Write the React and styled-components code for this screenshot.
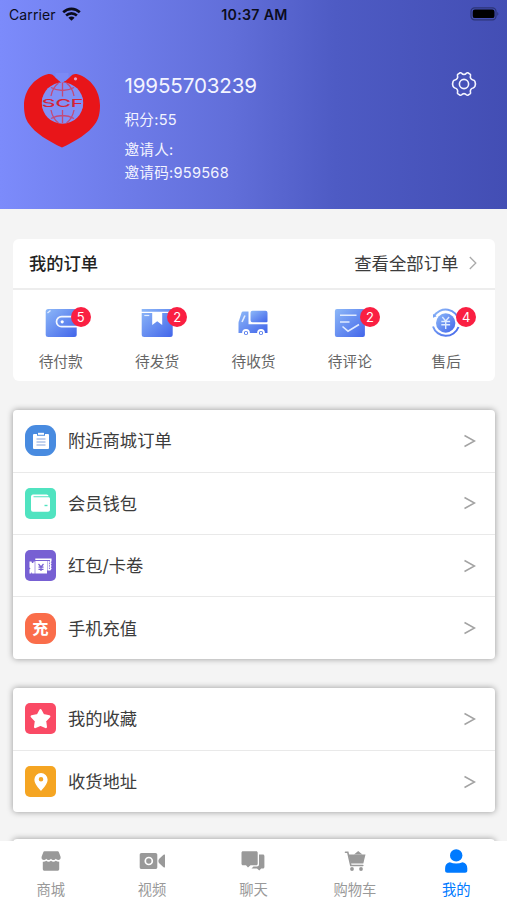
import React from 'react';
import styled, { createGlobalStyle, css } from 'styled-components';

const GlobalStyle = createGlobalStyle`
  * {
    box-sizing: border-box;
  }
  body {
    margin: 0;
    background: #f4f4f4;
    font-family: Inter, 'Noto Sans CJK SC', sans-serif;
    color: #3c3c3c;
    overflow: hidden;
  }
`;

const Page = styled.div`
  display: flex;
  flex-direction: column;
  width: 507px;
  height: 900px;
  overflow: hidden;
  background: #f4f4f4;
`;

const Header = styled.header`
  flex: none;
  height: 208.5px;
  background: linear-gradient(to right, #7c8bfb 0%, #616ed9 46%, #4e5bc4 66%, #434eb4 100%);
`;

const StatusBar = styled.div`
  display: grid;
  grid-template-columns: 1fr auto 1fr;
  align-items: center;
  height: 28px;
  padding: 0 7px 0 9px;
  color: #0b0c1c;
  font-size: 14px;

  .status__carrier {
    display: flex;
    align-items: center;
    gap: 6px;
    letter-spacing: 0.1px;
  }
  .status__time {
    font-size: 14.2px;
    font-weight: 600;
    letter-spacing: 0.3px;
  }
  .status__battery {
    justify-self: end;
    display: block;
  }
`;

const Profile = styled.div`
  display: flex;
  align-items: flex-start;
  padding: 44px 30px 0 23px;

  .profile__logo {
    flex: none;
    margin-top: 1px;
  }
  .profile__gear {
    margin: -1px 0 0 auto;
  }
`;

const ProfileInfo = styled.div`
  margin-left: 23.5px;
  color: #f3f4ff;

  p {
    margin: 0;
    font-size: 14.6px;
    line-height: 23px;
    letter-spacing: 0.25px;
    white-space: nowrap;
  }
  .profile__phone {
    font-size: 20.6px;
    line-height: 28px;
    letter-spacing: -0.15px;
  }
  .profile__points {
    margin: 9px 0 7px;
  }
`;

const Content = styled.main`
  flex: 1;
  min-height: 0;
  padding: 30.5px 12.5px 0;
  overflow: hidden;
`;

const OrderCard = styled.section`
  height: 141.5px;
  border-radius: 6px;
  background: #fff;
`;

const OrderHead = styled.div`
  display: flex;
  align-items: center;
  height: 51px;
  padding: 0 18px 2px 16.5px;
  border-bottom: 2px solid #ededed;
  font-size: 17.4px;

  h2 {
    margin: 0;
    font-size: 17.3px;
    font-weight: 500;
    color: #222;
  }
  span {
    margin-left: auto;
  }
  svg {
    margin-left: 10px;
  }
`;

const OrderGrid = styled.div`
  display: grid;
  grid-template-columns: repeat(5, 1fr);
`;

const OrderItem = styled.div`
  display: flex;
  flex-direction: column;
  align-items: center;
  padding-top: 18px;
  color: #666;
  font-size: 14.7px;
  line-height: 22px;

  .order__icon {
    position: relative;
    height: 30px;
    margin-bottom: 13px;
  }
  svg {
    display: block;
  }
`;

const Badge = styled.span`
  position: absolute;
  top: -1px;
  left: 26px;
  width: 20px;
  height: 20px;
  border-radius: 50%;
  background: #fa1f42;
  color: #fff;
  font-size: 13px;
  line-height: 20px;
  text-align: center;
`;

const MenuCard = styled.section`
  margin-top: ${({ $gap }) => $gap || '29px'};
  border-radius: 4px;
  background: #fff;
  box-shadow: 0 0 6px rgba(0, 0, 0, 0.38);
`;

const MenuRow = styled.div`
  display: flex;
  align-items: center;
  height: 62.3px;
  padding: 0 18.5px 0 12.5px;
  font-size: 17.3px;

  & + & {
    border-top: 1.5px solid #e9e9e9;
  }
  .menu__label {
    flex: 1;
    margin-left: 12px;
    padding-bottom: 2px;
  }
`;

const Tile = styled.div`
  display: flex;
  align-items: center;
  justify-content: center;
  width: 31px;
  height: 31px;
  border-radius: ${({ $round }) => ($round ? '11px' : '5px')};
  background: ${({ $color }) => $color};
  color: #fff;
  font-size: 16.3px;
  font-weight: 700;
  line-height: 28px;
`;

const TabBar = styled.nav`
  flex: none;
  display: grid;
  grid-template-columns: repeat(5, 1fr);
  height: 59.5px;
  background: #fff;
`;

const Tab = styled.div`
  display: flex;
  flex-direction: column;
  align-items: center;
  padding-top: 8px;
  color: #999;
  font-size: 14.3px;
  line-height: 20px;

  svg {
    display: block;
    margin-bottom: 7px;
  }
  ${({ $active }) =>
    $active &&
    css`
      color: #007aff;
    `}
`;

const WifiIcon = () => (
  <svg width="19" height="14" viewBox="0 0 19 14" fill="none" stroke="#0b0c1c" strokeWidth="2.6">
    <path d="M1.2 5.3C6 .7 13 .7 17.8 5.3" />
    <path d="M4.1 8.5c3.1-2.9 7.7-2.9 10.8 0" />
    <path d="M9.5 13.8 6.4 10.7c1.7-1.5 4.5-1.5 6.2 0z" fill="#0b0c1c" stroke="none" />
  </svg>
);

const BatteryIcon = () => (
  <svg className="status__battery" width="30" height="14" viewBox="0 0 30 14">
    <rect x="1" y=".8" width="25" height="12" rx="3.6" fill="none" stroke="#2c3577" strokeWidth="1.2" />
    <rect x="2.7" y="2.5" width="21.8" height="8.6" rx="2.2" fill="#000" />
    <path d="M27.3 5v3.8c1.4-.5 1.4-3.3 0-3.8z" fill="#2c3577" />
  </svg>
);

const Logo = () => (
  <svg className="profile__logo" width="78" height="76" viewBox="0 0 78 76">
    <path
      d="M24.5 1.2c3.2-.8 5.3.1 8 3.2l4 3.6c1.5.6 4.5.6 6 0l4-3.6c2.7-3.1 4.8-4 8-3.2C67.5 5 77 17.5 77 32.5c0 7.5-1.5 14-5 18.5C66 60 52 68.5 39 74.5 26 68.5 12 60 6 51 2.5 46.5 1 40 1 32.5 1 17.5 11 5 24.500 1.200z"
      fill="#e81519"
    />
    <path d="m32.500 4.500 6.500 6 6.500-6V0h-13z" fill="#7b8af5" />
    <circle cx="39.500" cy="30" r="20.700" fill="#8290f5" />
    <g fill="none" stroke="#c34a78" strokeWidth="1.300">
      <path d="M39.500 9.500v14M39.500 37v13.500M28 14.500c7 4 16 4 23 0M28 45.500c7-4 16-4 23 0" />
      <path d="M35.500 10c-4 3-6.500 7.500-7.500 13M43.500 10c4 3 6.500 7.500 7.500 13M28 37c1 5.500 3.500 10 7.500 13M51 37c-1 5.500-3.500 10-7.500 13" />
    </g>
    <rect x="19.500" y="24.500" width="40" height="11" fill="#8290f5" />
    <text
      x="18.800"
      y="34"
      textLength="41.500"
      lengthAdjust="spacingAndGlyphs"
      fontFamily="Inter, sans-serif"
      fontSize="11"
      fontWeight="500"
      fill="#d52335"
    >
      SCF
    </text>
    <circle cx="52.500" cy="5.800" r="1.600" fill="#e9a0c0" />
  </svg>
);

const GearIcon = () => (
  <svg className="profile__gear" width="26" height="26" viewBox="0 0 26 26" fill="none" stroke="#f3f4ff" strokeWidth="1.600" strokeLinejoin="round">
    <path d="M9.200 1.800Q10 1.500 10.700 2.200C11.800 3.800 14.200 3.800 15.300 2.200Q16 1.500 16.800 1.800L19 3.100Q19.800 3.700 19.500 4.700C18.800 6.600 20 8.700 22 9Q23.200 9.200 23.900 10.400Q24.900 12.500 23.900 15.400Q23.200 16.700 22 17C20 17.300 18.800 19.400 19.500 21.300Q19.800 22.300 19 22.900L16.800 24.200Q16 24.500 15.300 23.800C14.200 22.200 11.800 22.200 10.700 23.800Q10 24.500 9.200 24.200L7 22.900Q6.200 22.300 6.500 21.300C7.200 19.400 6 17.300 4 17Q2.800 16.700 2.100 15.400Q1.100 12.500 2.100 10.400Q2.800 9.200 4 9C6 8.700 7.200 6.600 6.500 4.700Q6.200 3.700 7 3.100Z" />
    <circle cx="13" cy="13" r="4.600" />
  </svg>
);

const HeadArrow = () => (
  <svg width="8" height="14" viewBox="0 0 8 14" fill="none" stroke="#aaa" strokeWidth="1.300">
    <path d="m.8 1 6 6-6 6" />
  </svg>
);

const RowArrow = () => (
  <svg width="12" height="14" viewBox="0 0 12 14" fill="none" stroke="#a3a3a3" strokeWidth="1.500">
    <path d="m.5 1.500 10 5.500-10 5.500" />
  </svg>
);

const BlueFill = ({ id }) => (
  <defs>
    <linearGradient id={id} x1="0" y1="0" x2="1" y2="1">
      <stop offset="0" stopColor="#8db8f8" />
      <stop offset="1" stopColor="#4265ea" />
    </linearGradient>
  </defs>
);

const orderIcons = {
  pay: (
    <svg width="32" height="30" viewBox="0 0 32 30">
      <BlueFill id="pay" />
      <rect x=".7" y="1" width="31" height="28" rx="2.500" fill="url(#pay)" />
      <path d="M2.500 5 5.500 2.500" stroke="#e3eeff" strokeWidth="1.300" />
      <path d="M32 8.700H16.500a5 5 0 0 0 0 10H32" fill="none" stroke="#f3f7ff" strokeWidth="1.700" />
      <circle cx="17.200" cy="13.800" r="1.600" fill="#fff" />
    </svg>
  ),
  box: (
    <svg width="32" height="30" viewBox="0 0 32 30">
      <BlueFill id="box" />
      <path d="M.7 1h31v2.800H.7zM.7 5h10.500v12l5-3.800 5 3.800V5h10.500v21.500a2.500 2.500 0 0 1-2.500 2.500h-26A2.500 2.500 0 0 1 .7 26.500z" fill="url(#box)" />
      <path d="M3.300 7.500h5" stroke="#e3eeff" strokeWidth="1.200" />
    </svg>
  ),
  truck: (
    <svg width="32" height="30" viewBox="0 0 32 30">
      <BlueFill id="truck" />
      <path d="M15.500 2.800h13a2 2 0 0 1 2 2v8.500a1 1 0 0 1-1 1h-14a2 2 0 0 1-2-2V4.800a2 2 0 0 1 2-2z" fill="url(#truck)" />
      <path d="M6 3.500h5.500v12.800h19v8.800H1.500V15c0-1 .2-1.700.6-2.500l2.500-8c.3-.6.800-1 1.400-1z" fill="url(#truck)" />
      <path d="M8 7.500 5 14" stroke="#e3eeff" strokeWidth="1.600" />
      <circle cx="9" cy="25" r="3" fill="#4c74eb" stroke="#fff" strokeWidth="1.800" />
      <circle cx="24" cy="25" r="3" fill="#4c74eb" stroke="#fff" strokeWidth="1.800" />
      <circle cx="9" cy="25" r="1.200" fill="#fff" />
      <circle cx="24" cy="25" r="1.200" fill="#fff" />
    </svg>
  ),
  comment: (
    <svg width="32" height="30" viewBox="0 0 32 30">
      <BlueFill id="comment" />
      <rect x=".9" y="1" width="30" height="28" rx="2" fill="url(#comment)" />
      <path d="M6 7.300h16.500M6 14h9.500M8.500 18.500l5.500 4.700L25 16.500" fill="none" stroke="#dfeaff" strokeWidth="1.600" />
    </svg>
  ),
  refund: (
    <svg width="32" height="30" viewBox="0 0 32 30">
      <BlueFill id="refund" />
      <circle cx="15.700" cy="15" r="9.700" fill="url(#refund)" />
      <path d="M3.800 8.500A13.500 13.500 0 0 1 29 13M3 18.500A13.500 13.500 0 0 0 28.500 19" fill="none" stroke="url(#refund)" strokeWidth="2" />
      <path d="M3 6v3.800l3.700-1.500z" fill="#79a4f4" />
      <path d="m12.300 9 3.400 4 3.400-4M11.300 13.500h8.800M11.300 16.800h8.800M15.700 13v8" fill="none" stroke="#dfeaff" strokeWidth="1.400" />
    </svg>
  ),
};

const menuIcons = {
  orders: (
    <svg width="18" height="20" viewBox="0 0 18 20">
      <path d="M2 3h3v1.800h8V3h3a1 1 0 0 1 1 1v13a1 1 0 0 1-1 1H2a1 1 0 0 1-1-1V4a1 1 0 0 1 1-1z" fill="#fff" />
      <path d="M6 1.800h6v2H6z" fill="#fff" />
      <path d="M4.500 8h9M4.500 11h9M4.500 14h9" stroke="#85a4dc" strokeWidth="1" />
    </svg>
  ),
  wallet: (
    <svg width="21" height="20" viewBox="0 0 21 20">
      <path d="M3 1.500h13.500c1.200 0 2 .7 2 1.800H3.500v1h15c.9 0 1.500.6 1.500 1.500v11c0 1.200-.8 2-2 2H3a2 2 0 0 1-2-2v-13c0-1.300.8-2.300 2-2.300z" fill="#fff" />
      <path d="M14.500 12.500h3" stroke="#50e3c0" strokeWidth="1.400" />
    </svg>
  ),
  coupon: (
    <svg width="23" height="18" viewBox="0 0 23 18">
      <path d="M.5 4.500h2L3 6h1.200l.5-1.500h1V16.500H3.200L2.700 15l-.5 1.500H.5v-4l1-1-1-1z" fill="#fff" />
      <path d="M6.300 4H18v12.500H6.300z" fill="#fff" />
      <path
        d="M6.300 2.300h15.500V4l-.8 1 .8 1.300-.8 1.300.8 1.300-.8 1.300.8 1.300-.8 1.300h-1.800V4"
        fill="none"
        stroke="#fff"
        strokeWidth="1.500"
      />
      <path d="m9.500 7 2.500 3 2.500-3M9.500 10.200h5M9.500 12.300h5M12 9.500v4.500" fill="none" stroke="#7760d3" strokeWidth="1.200" />
    </svg>
  ),
  recharge: '充',
  star: (
    <svg width="23" height="22" viewBox="0 0 23 22">
      <path
        d="m11.500 2.300 2.700 5 6 1.200-4.200 4.500.8 6-5.300-2.400L6.200 19l.8-6-4.200-4.500 6-1.200z"
        fill="#fff"
        stroke="#fff"
        strokeWidth="2.400"
        strokeLinejoin="round"
      />
    </svg>
  ),
  pin: (
    <svg width="16" height="20" viewBox="0 0 16 20">
      <path d="M8 1a6.600 6.600 0 0 1 6.600 6.600C14.600 12 10.500 16 8 19 5.500 16 1.400 12 1.400 7.600A6.600 6.600 0 0 1 8 1zm0 4a2.300 2.300 0 1 0 0 4.600A2.300 2.300 0 0 0 8 5z" fill="#fff" />
    </svg>
  ),
};

const tabIcons = {
  shop: (
    <svg width="22" height="24" viewBox="0 0 22 24" fill="currentColor">
      <path d="M4.500 2.300h13.200c.6 0 1 .3 1.200.9l1.600 4.300c.6 2.200-.4 3.500-2.200 3.500-1.500 0-2.200-1-2.500-1.200-.6.900-1.400 1.200-2.400 1.200S11.500 10.600 11 9.800c-.6.800-1.400 1.200-2.400 1.200s-1.800-.4-2.400-1.200C5.700 10.600 5 11 4 11 2.100 11 1.100 9.500 1.700 7.500l1.600-4.300c.2-.6.600-.9 1.200-.9z" />
      <path d="M2.800 12.800c1.500 0 2.500-.3 3.400-1 1.500 1.200 3.300 1.200 4.800 0 1.500 1.200 3.300 1.200 4.800 0 .9.700 2 1 3.400 1v7.200c0 1.200-.7 1.800-1.800 1.800H4.600c-1.100 0-1.800-.6-1.800-1.800z" />
    </svg>
  ),
  video: (
    <svg width="26" height="24" viewBox="0 0 26 24" fill="currentColor">
      <path d="M2.500 4h14c1 0 1.800.7 1.800 1.800v12.400c0 1-.8 1.800-1.800 1.800h-14C1.500 20 .7 19.200.7 18.200V5.800C.7 4.700 1.500 4 2.500 4zM26 5.500v13l-1.500-.3-4-3.600c-1.500-1.500-1.500-3.700 0-5.200l4-3.600z" />
      <circle cx="9.800" cy="12" r="3.500" fill="none" stroke="#fff" strokeWidth="1.700" />
    </svg>
  ),
  chat: (
    <svg width="24" height="24" viewBox="0 0 24 24" fill="currentColor">
      <path d="M2 2.200h13.200c.9 0 1.500.6 1.500 1.500v11c0 .9-.6 1.500-1.500 1.500H9.500l-2.500 2.300-2-2.300H2c-.9 0-1.500-.6-1.500-1.500v-11c0-.9.600-1.500 1.500-1.500z" />
      <path d="M18 5.500h3.900c.9 0 1.500.6 1.500 1.500v11c0 .9-.6 1.500-1.500 1.500h-1.700l-1.900 2-2.300-2h-5.500l2-2H16c1.200 0 2-.8 2-2z" />
    </svg>
  ),
  cart: (
    <svg width="22" height="24" viewBox="0 0 22 24" fill="currentColor">
      <path d="M1.500 3.200h2.300l3 13.300h12" fill="none" stroke="currentColor" strokeWidth="1.600" strokeLinecap="round" />
      <path d="M4.500 5.500H21.500l-2.200 9H6.700z" />
      <path d="m10 5.500 4.200-3.500 4.200 3.500z" />
      <circle cx="8" cy="20" r="1.900" />
      <circle cx="17" cy="20" r="1.900" />
    </svg>
  ),
  me: (
    <svg width="24" height="24" viewBox="0 0 24 24" fill="currentColor">
      <circle cx="12.200" cy="6.400" r="6.200" />
      <path d="M5.800 13.300c4 1.600 8.800 1.600 12.800 0 3 .6 4.700 2.900 4.700 5.900v2.600c0 1.300-.9 2-2.200 2H3.300c-1.300 0-2.200-.7-2.200-2v-2.600c0-3 1.700-5.300 4.700-5.900z" />
    </svg>
  ),
};

const orders = [
  { label: '待付款', icon: 'pay', count: 5 },
  { label: '待发货', icon: 'box', count: 2 },
  { label: '待收货', icon: 'truck' },
  { label: '待评论', icon: 'comment', count: 2 },
  { label: '售后', icon: 'refund', count: 4 },
];

const services = [
  { label: '附近商城订单', icon: 'orders', color: '#488be0', round: true },
  { label: '会员钱包', icon: 'wallet', color: '#50e3c0' },
  { label: '红包/卡卷', icon: 'coupon', color: '#7760d3' },
  { label: '手机充值', icon: 'recharge', color: '#fa6d4a', round: true },
];

const personal = [
  { label: '我的收藏', icon: 'star', color: '#fa4a65' },
  { label: '收货地址', icon: 'pin', color: '#f5a522' },
];

const tabs = [
  { label: '商城', icon: 'shop' },
  { label: '视频', icon: 'video' },
  { label: '聊天', icon: 'chat' },
  { label: '购物车', icon: 'cart' },
  { label: '我的', icon: 'me', active: true },
];

function Menu({ items, gap }) {
  return (
    <MenuCard $gap={gap}>
      {items.map((item) => (
        <MenuRow key={item.label}>
          <Tile $color={item.color} $round={item.round}>
            {menuIcons[item.icon]}
          </Tile>
          <span className="menu__label">{item.label}</span>
          <RowArrow />
        </MenuRow>
      ))}
    </MenuCard>
  );
}

function App() {
  return (
    <Page>
      <GlobalStyle />
      <Header>
        <StatusBar>
          <div className="status__carrier">
            <span>Carrier</span>
            <WifiIcon />
          </div>
          <span className="status__time">10:37 AM</span>
          <BatteryIcon />
        </StatusBar>
        <Profile>
          <Logo />
          <ProfileInfo>
            <p className="profile__phone">19955703239</p>
            <p className="profile__points">积分:55</p>
            <p>邀请人:</p>
            <p>邀请码:959568</p>
          </ProfileInfo>
          <GearIcon />
        </Profile>
      </Header>
      <Content>
        <OrderCard>
          <OrderHead>
            <h2>我的订单</h2>
            <span>查看全部订单</span>
            <HeadArrow />
          </OrderHead>
          <OrderGrid>
            {orders.map((item) => (
              <OrderItem key={item.label}>
                <div className="order__icon">
                  {orderIcons[item.icon]}
                  {item.count && <Badge>{item.count}</Badge>}
                </div>
                {item.label}
              </OrderItem>
            ))}
          </OrderGrid>
        </OrderCard>
        <Menu items={services} />
        <Menu items={personal} />
        <MenuCard $gap="26.5px">
          <MenuRow />
        </MenuCard>
      </Content>
      <TabBar>
        {tabs.map((tab) => (
          <Tab key={tab.label} $active={tab.active}>
            {tabIcons[tab.icon]}
            {tab.label}
          </Tab>
        ))}
      </TabBar>
    </Page>
  );
}

export default App;
